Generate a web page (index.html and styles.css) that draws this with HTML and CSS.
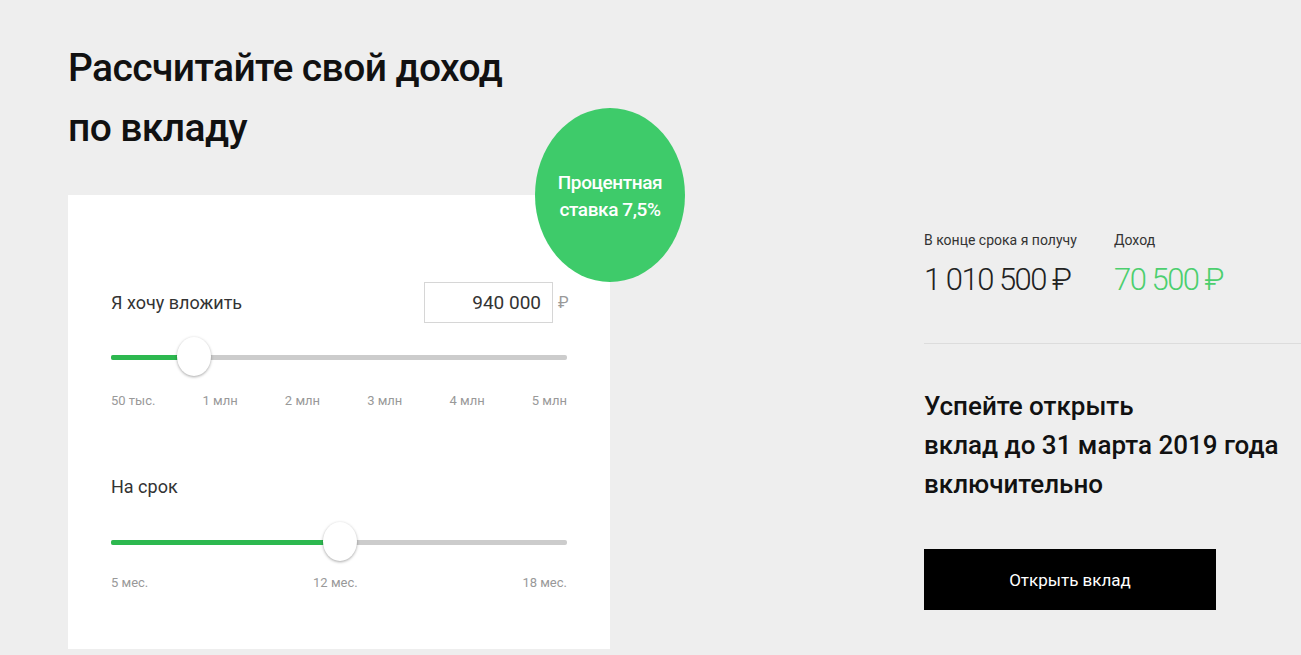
FILE: index.html
```html
<!DOCTYPE html>
<html lang="ru">
<head>
<meta charset="utf-8">
<link rel="stylesheet" href="styles.css">
</head>
<body>
<div class="page">
  <div class="left">
    <h1 class="title">Рассчитайте свой доход<br>по вкладу</h1>
    <div class="card">
      <div class="badge"><span>Процентная<br>ставка 7,5%</span></div>
      <div class="row">
        <span class="label">Я хочу вложить</span>
        <div class="inputwrap">
          <div class="input">940 000</div>
          <span class="cur">₽</span>
        </div>
      </div>
      <div class="slider s1">
        <div class="track"><div class="fill" style="width:82px"></div></div>
        <div class="thumb" style="left:66px"></div>
      </div>
      <div class="ticks t1">
        <span>50 тыс.</span><span>1 млн</span><span>2 млн</span><span>3 млн</span><span>4 млн</span><span>5 млн</span>
      </div>
      <div class="label label2">На срок</div>
      <div class="slider s2">
        <div class="track"><div class="fill" style="width:214px"></div></div>
        <div class="thumb" style="left:212px"></div>
      </div>
      <div class="ticks t2">
        <span>5 мес.</span><span>12 мес.</span><span>18 мес.</span>
      </div>
    </div>
  </div>
  <div class="right">
    <div class="results">
      <div class="res">
        <div class="rlabel">В конце срока я получу</div>
        <div class="rval">1 010 500 ₽</div>
      </div>
      <div class="res">
        <div class="rlabel">Доход</div>
        <div class="rval green">70 500 ₽</div>
      </div>
    </div>
    <div class="divider"></div>
    <div class="promo">Успейте открыть<br>вклад до 31 марта 2019 года<br>включительно</div>
    <div class="btn">Открыть вклад</div>
  </div>
</div>
</body>
</html>
```
FILE: styles.css
```css
html, body {
  margin: 0;
  padding: 0;
  background: #eeeeee;
  font-family: Roboto, "Liberation Sans", sans-serif;
  color: #222;
  overflow: hidden;
}
.page {
  display: flex;
  width: 1301px;
  height: 655px;
}
.left {
  width: 542px;
  padding-left: 68px;
}
.title {
  margin: 38px 0 0 0;
  font-size: 39px;
  font-weight: 500;
  line-height: 60px;
  color: #111;
  letter-spacing: -0.6px;
}
.card {
  position: relative;
  margin-top: 37px;
  background: #fff;
  height: 454px;
  padding: 87px 43px 0 43px;
  box-sizing: border-box;
}
.badge {
  position: absolute;
  right: -75px;
  top: -87px;
  width: 150px;
  height: 174px;
  border-radius: 50%;
  background: #3ecb6a;
  color: #fff;
  display: flex;
  align-items: center;
  justify-content: center;
  text-align: center;
  font-size: 19px;
  font-weight: 500;
  line-height: 27px;
  letter-spacing: -0.4px;
}
.badge span { margin-top: 2px; }
.row {
  display: flex;
  justify-content: space-between;
  align-items: center;
  height: 41px;
}
.label {
  font-size: 18px;
  color: #333;
}
.inputwrap {
  display: flex;
  align-items: center;
  gap: 5px;
}
.input {
  width: 129px;
  height: 41px;
  box-sizing: border-box;
  border: 1px solid #d6d6d6;
  text-align: right;
  padding-right: 11px;
  font-size: 19px;
  line-height: 39px;
  color: #333;
}
.cur {
  font-size: 16px;
  color: #999;
  width: 9px;
}
.slider {
  position: relative;
  height: 40px;
}
.s1 { margin-top: 14px; }
.track {
  position: absolute;
  left: 0; right: 0;
  top: 18px;
  height: 5px;
  background: #cccccc;
  border-radius: 2px;
}
.fill {
  height: 5px;
  background: #2db84f;
  border-radius: 2px;
}
.thumb {
  position: absolute;
  top: 0;
  width: 34px;
  height: 39px;
  border-radius: 50%;
  background: #fff;
  box-shadow: 0 1px 3px rgba(0,0,0,0.35);
}
.ticks {
  display: flex;
  justify-content: space-between;
  font-size: 13px;
  color: #999;
}
.t1 { margin-top: 16px; }
.t2 { margin-top: 13px; }
.label2 { margin-top: 68px; }
.s2 { margin-top: 25px; }
.right {
  margin-left: 314px;
  flex: 1;
  padding-top: 230px;
}
.results {
  display: flex;
  gap: 28px;
}
.res:first-child { width: 162px; }
.rlabel {
  font-size: 14px;
  color: #333;
  line-height: 20px;
}
.rval {
  font-size: 31px;
  font-weight: 300;
  color: #222;
  margin-top: 11px;
  letter-spacing: -1.5px;
}
.green { color: #4ccf6e; }
.divider {
  height: 1px;
  background: #dcdcdc;
  margin-top: 45px;
}
.promo {
  margin-top: 43px;
  font-size: 26px;
  font-weight: 500;
  line-height: 39px;
  color: #111;
}
.btn {
  margin-top: 45px;
  width: 292px;
  height: 61px;
  background: #000;
  color: #fff;
  font-size: 17px;
  display: flex;
  align-items: center;
  justify-content: center;
}
```
